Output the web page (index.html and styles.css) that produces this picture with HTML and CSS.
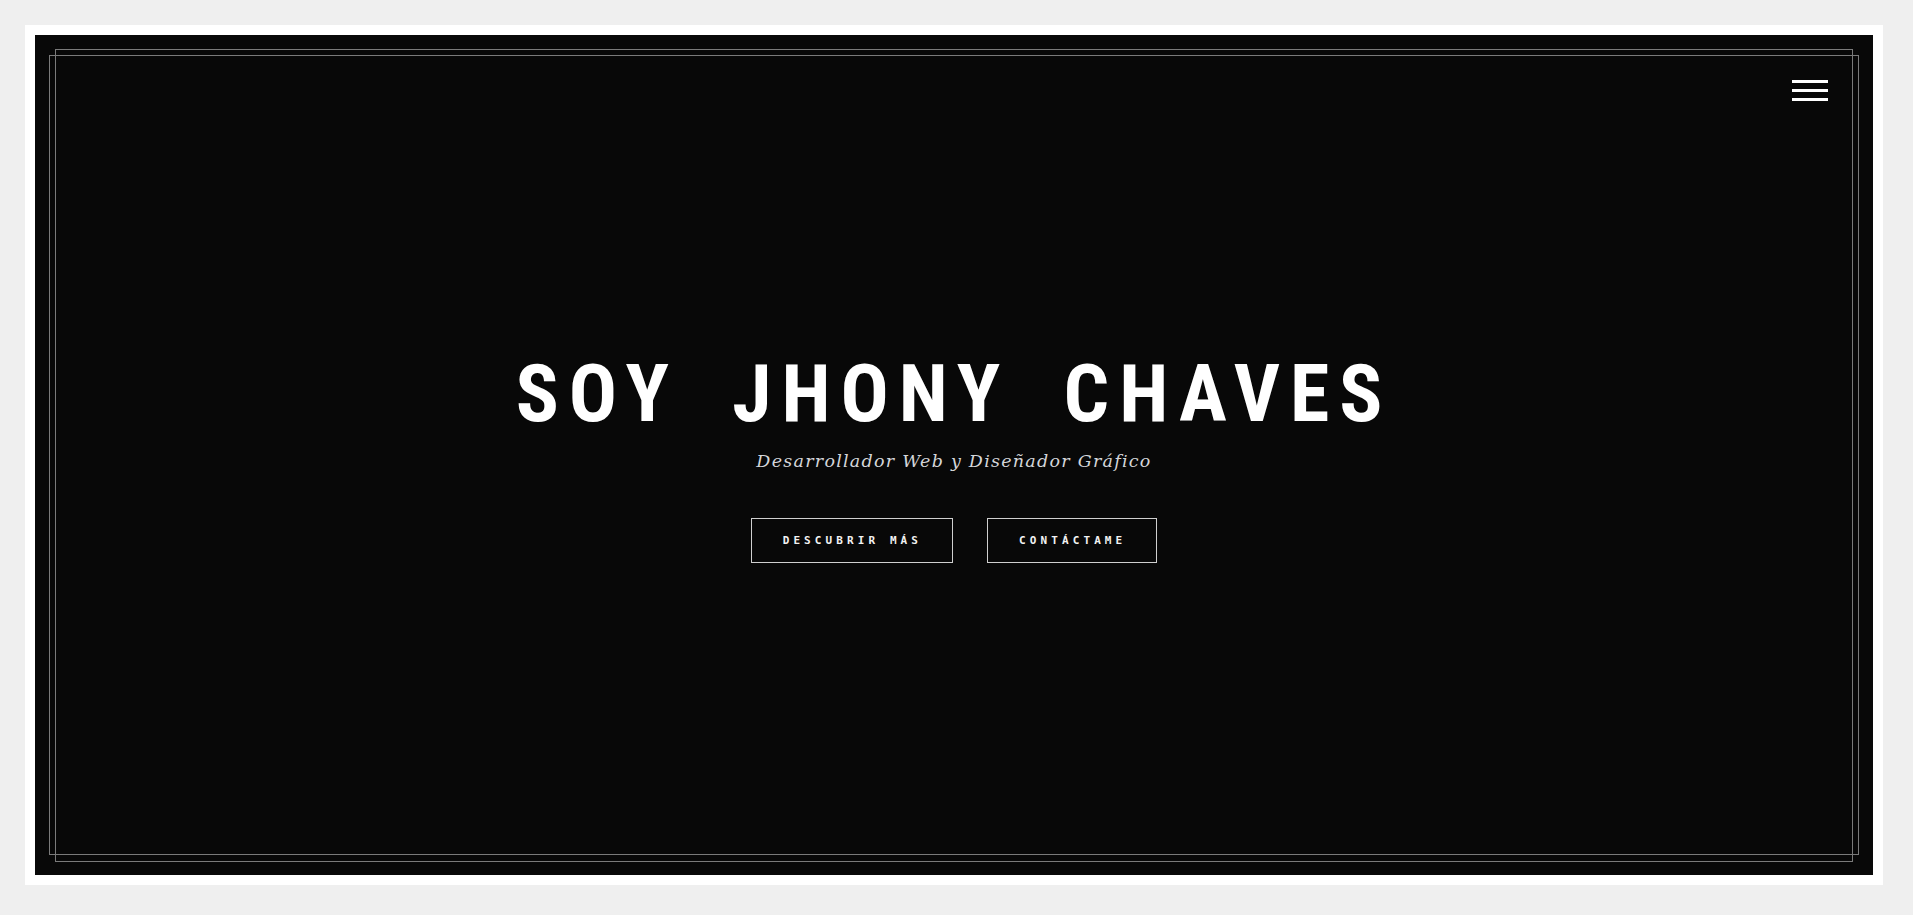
FILE: index.html
```html
<!DOCTYPE html>
<html lang="es">
<head>
<meta charset="utf-8">
<title>Jhony Chaves</title>
<link rel="stylesheet" href="styles.css">
</head>
<body>
<div class="frame">
  <section class="hero">
    <div class="line line-a"></div>
    <div class="line line-b"></div>
    <button class="menu" aria-label="Menú">
      <span></span><span></span><span></span>
    </button>
    <div class="hero-content">
      <h1 class="title">SOY JHONY CHAVES</h1>
      <p class="subtitle">Desarrollador Web y Diseñador Gráfico</p>
      <div class="actions">
        <a class="btn" href="#">DESCUBRIR MÁS</a>
        <a class="btn" href="#">CONTÁCTAME</a>
      </div>
    </div>
  </section>
</div>
</body>
</html>
```
FILE: styles.css
```css
* { box-sizing: border-box; }
html, body { height: 100%; }
body {
  margin: 0;
  padding: 25px 30px 30px 25px;
  background: #efefef;
  font-family: "Roboto", "Liberation Sans", sans-serif;
}
.frame {
  height: 100%;
  background: #ffffff;
  padding: 10px;
}
.hero {
  position: relative;
  height: 100%;
  background: #080808;
  display: flex;
  align-items: center;
  justify-content: center;
  padding-top: 7px;
}
.line {
  position: absolute;
  border: 1px solid #7a7a7a;
  pointer-events: none;
}
.line-a { top: 14px; left: 20px; right: 20px; bottom: 13px; }
.line-b { top: 20px; left: 14px; right: 14px; bottom: 20px; }
.menu {
  position: absolute;
  top: 45px;
  right: 45px;
  width: 36px;
  height: 21px;
  padding: 0;
  border: 0;
  background: transparent;
  display: flex;
  flex-direction: column;
  justify-content: space-between;
  cursor: pointer;
}
.menu span {
  display: block;
  height: 3px;
  background: #ffffff;
}
.hero-content {
  display: flex;
  flex-direction: column;
  align-items: center;
  text-align: center;
}
.title {
  margin: 0;
  font-family: "Roboto Condensed", "Roboto", sans-serif;
  font-weight: 700;
  font-size: 80px;
  line-height: 1;
  letter-spacing: 10px;
  word-spacing: 25px;
  color: #ffffff;
}
.subtitle {
  margin: 15px 0 0;
  font-family: "DejaVu Serif", "Liberation Serif", serif;
  font-style: italic;
  font-size: 17.5px;
  line-height: 25.5px;
  letter-spacing: 1.25px;
  color: #d4d6da;
}
.actions {
  display: flex;
  gap: 34px;
  margin-top: 44px;
}
.btn {
  display: block;
  height: 45px;
  line-height: 43px;
  padding: 0 30px 0 31px;
  border: 1px solid #cfcfcf;
  font-family: "DejaVu Sans Mono", "Liberation Mono", monospace;
  font-weight: 700;
  font-size: 11px;
  letter-spacing: 4.1px;
  color: #f2f2f2;
  text-decoration: none;
}
```
